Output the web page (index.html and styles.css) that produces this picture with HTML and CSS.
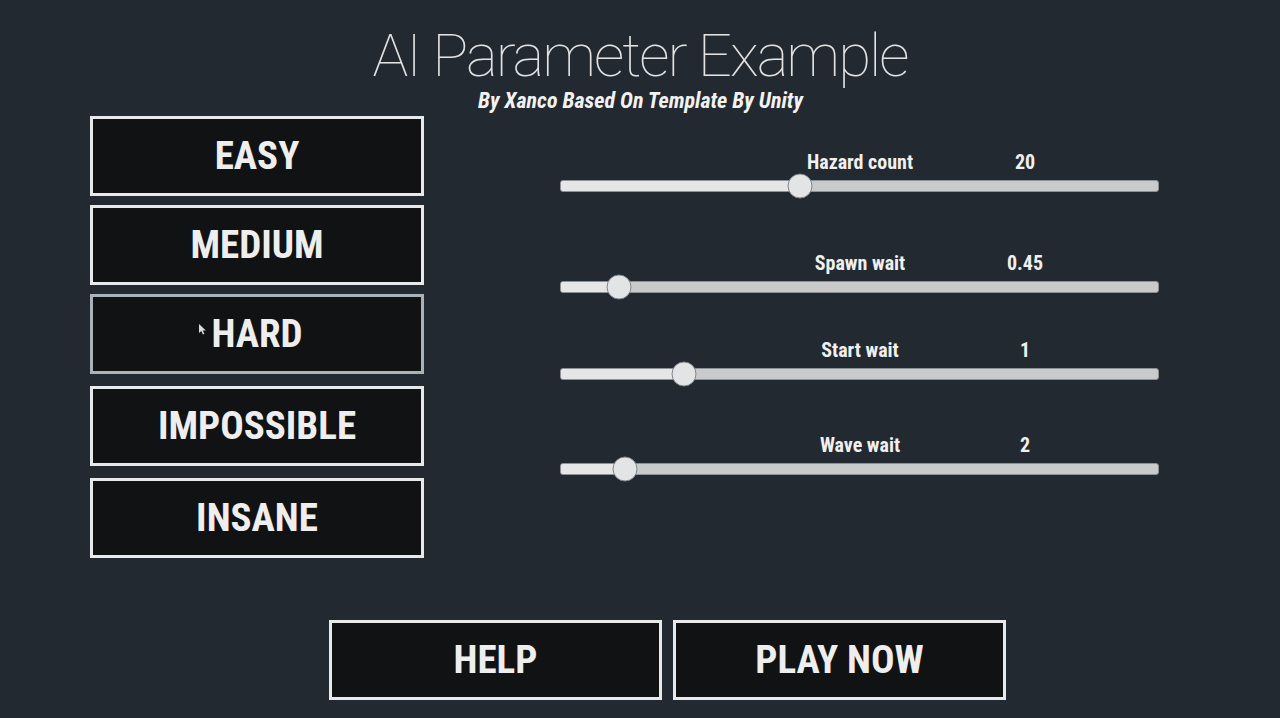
FILE: index.html
```html
<!DOCTYPE html>
<html lang="en">
<head>
    <meta charset="UTF-8">
    <meta name="viewport" content="width=device-width, initial-scale=1.0">
    <title>AI Parameter Example</title>
    <link rel="stylesheet" href="styles.css">
</head>
<body>
    <header class="header">
        <h1 class="title">AI Parameter Example</h1>
        <p class="subtitle">By Xanco Based On Template By Unity</p>
    </header>

    <main class="main">
        <div class="difficulty">
            <button class="menu-button">EASY</button>
            <button class="menu-button">MEDIUM</button>
            <button class="menu-button hover">
                <svg class="cursor" width="9" height="12" viewBox="0 0 9 12"><path d="M1 1 L1 10 L3.2 8 L5 11.5 L6.4 10.8 L4.7 7.4 L7.8 7.4 Z" fill="#dcdcdc"/></svg>HARD
            </button>
            <button class="menu-button">IMPOSSIBLE</button>
            <button class="menu-button">INSANE</button>
        </div>

        <div class="params">
            <div class="slider hazard">
                <div class="slider-head">
                    <span class="slider-name">Hazard count</span>
                    <span class="slider-value">20</span>
                </div>
                <div class="track" style="--pos: 40.1%">
                    <div class="fill"></div>
                    <div class="knob"></div>
                </div>
            </div>
            <div class="slider spawn">
                <div class="slider-head">
                    <span class="slider-name">Spawn wait</span>
                    <span class="slider-value">0.45</span>
                </div>
                <div class="track" style="--pos: 9.7%">
                    <div class="fill"></div>
                    <div class="knob"></div>
                </div>
            </div>
            <div class="slider start">
                <div class="slider-head">
                    <span class="slider-name">Start wait</span>
                    <span class="slider-value">1</span>
                </div>
                <div class="track" style="--pos: 20.6%">
                    <div class="fill"></div>
                    <div class="knob"></div>
                </div>
            </div>
            <div class="slider wave">
                <div class="slider-head">
                    <span class="slider-name">Wave wait</span>
                    <span class="slider-value">2</span>
                </div>
                <div class="track" style="--pos: 10.7%">
                    <div class="fill"></div>
                    <div class="knob"></div>
                </div>
            </div>
        </div>
    </main>

    <footer class="footer">
        <button class="menu-button">HELP</button>
        <button class="menu-button">PLAY NOW</button>
    </footer>
</body>
</html>
```

FILE: styles.css
```css
body {
    margin: 0;
    height: 718px;
    overflow: hidden;
    background-color: #232930;
    color: #eeeeee;
    font-family: "Roboto Condensed", "Liberation Sans Narrow", Roboto, sans-serif;
}

.header {
    text-align: center;
    padding-top: 20px;
}

.title {
    margin: 0;
    font-family: Roboto, sans-serif;
    font-weight: 100;
    font-size: 60px;
    line-height: 72px;
    letter-spacing: -2px;
    color: #e2e2e2;
}

.subtitle {
    margin: 0;
    font-size: 22px;
    line-height: 18px;
    font-weight: bold;
    font-style: italic;
    color: #f2f2f2;
    padding-left: 1px;
}

.main {
    display: flex;
    margin-top: 6px;
    padding-left: 90px;
    gap: 136px;
}

.difficulty {
    display: flex;
    flex-direction: column;
    gap: 9px;
}

.difficulty .menu-button:nth-child(4),
.difficulty .menu-button:nth-child(5) {
    margin-top: 3px;
}

.menu-button {
    position: relative;
    display: flex;
    align-items: center;
    justify-content: center;
    width: 334px;
    height: 80px;
    box-sizing: border-box;
    background-color: #111213;
    border: 3px solid #e7e9eb;
    color: #eeeeee;
    font-family: inherit;
    font-weight: bold;
    font-size: 39px;
    padding: 0;
    cursor: pointer;
}

.menu-button.hover {
    border-color: #a9b1b9;
}

/* mouse pointer resting on the hovered button */
.cursor {
    position: absolute;
    left: 105px;
    top: 26px;
}

/* sliders */
.params {
    width: 599px;
}

.slider.hazard { margin-top: 36px; }
.slider.spawn { margin-top: 61px; }
.slider.start { margin-top: 47px; }
.slider.wave { margin-top: 55px; }

.slider-head {
    display: flex;
    padding-left: 210px;
    font-size: 20px;
    line-height: 20px;
    font-weight: bold;
    color: #f0f0f0;
}

.slider-name {
    width: 180px;
    text-align: center;
}

.slider-value {
    width: 150px;
    text-align: center;
}

.track {
    position: relative;
    margin-top: 8px;
    height: 12px;
    box-sizing: border-box;
    border: 1px solid #8d9095;
    border-radius: 3px;
    background-color: #c9cacb;
}

.fill {
    width: var(--pos);
    height: 100%;
    background-color: #e6e6e7;
    border-radius: 2px 0 0 2px;
}

.knob {
    position: absolute;
    left: var(--pos);
    top: 50%;
    width: 25px;
    height: 25px;
    box-sizing: border-box;
    transform: translate(-50%, -50%);
    border-radius: 50%;
    border: 1px solid #80848a;
    background-color: #e3e4e6;
}

.footer {
    display: flex;
    gap: 11px;
    margin-top: 62px;
    padding-left: 329px;
}

.footer .menu-button {
    width: 333px;
}
```
